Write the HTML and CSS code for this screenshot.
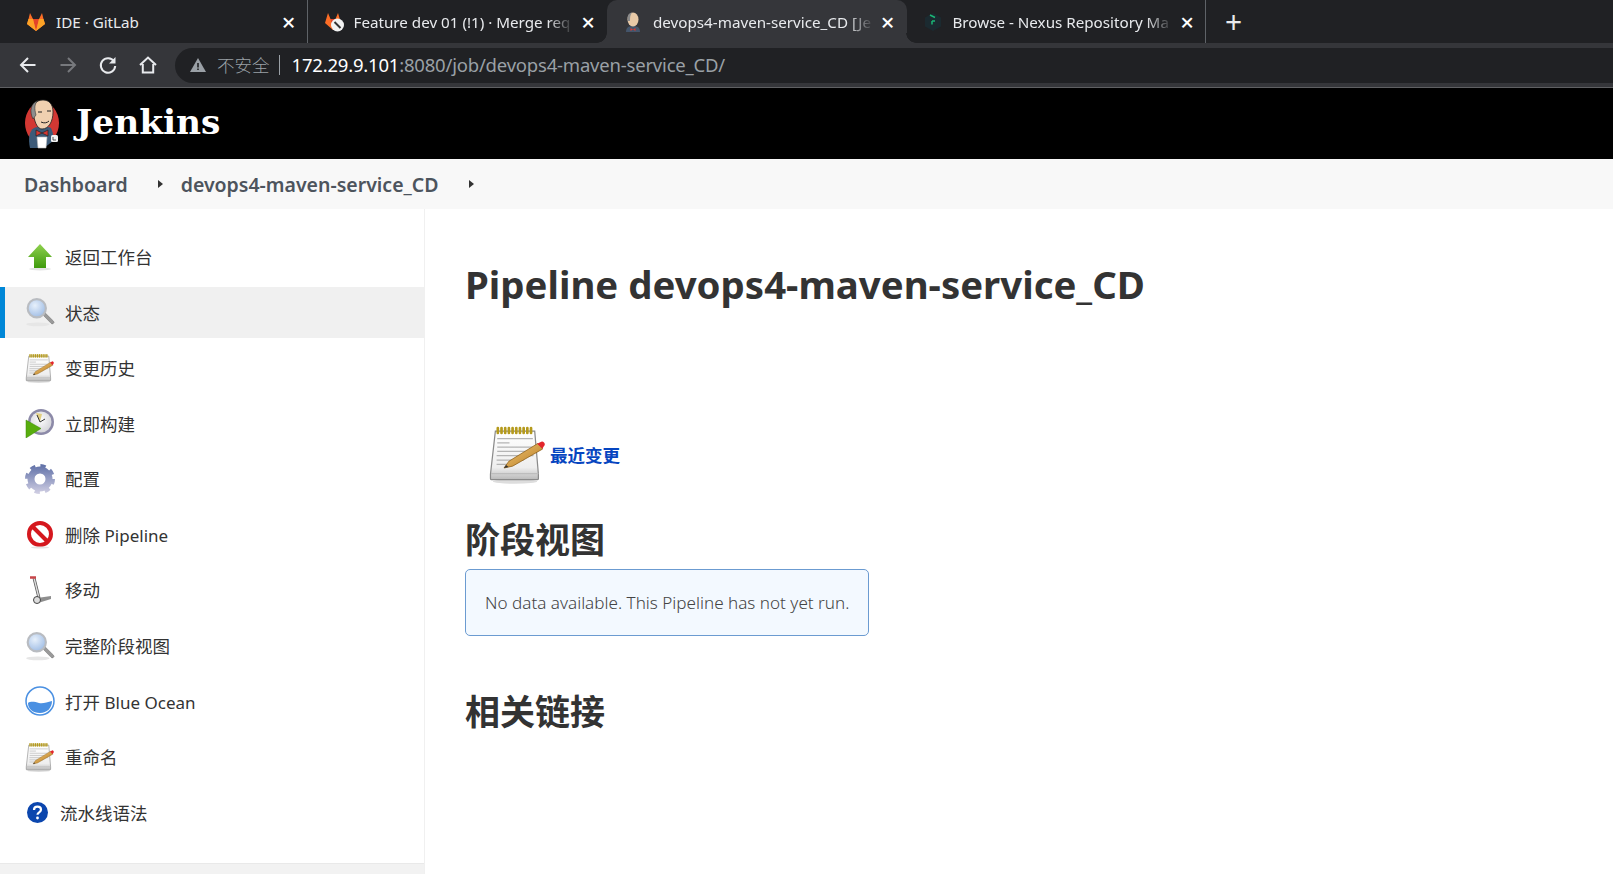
FILE: index.html
```html
<!DOCTYPE html>
<html lang="zh-CN">
<head>
<meta charset="utf-8">
<title>devops4-maven-service_CD [Jenkins]</title>
<link rel="stylesheet" href="styles.css">
</head>
<body>
<svg class="defs" width="0" height="0" aria-hidden="true">
  <defs>
    <linearGradient id="g-paper" x1="0" y1="0" x2="0" y2="1"><stop offset="0" stop-color="#fff"/><stop offset="0.75" stop-color="#eeeeee"/><stop offset="1" stop-color="#b9b9b9"/></linearGradient>
    <linearGradient id="g-pencil" x1="0" y1="0" x2="1" y2="1"><stop offset="0" stop-color="#f4c776"/><stop offset="1" stop-color="#b57b22"/></linearGradient>
    <linearGradient id="g-up" x1="0" y1="0" x2="0" y2="1"><stop offset="0" stop-color="#8fd14f"/><stop offset="1" stop-color="#3f9a0c"/></linearGradient>
    <radialGradient id="g-lens" cx="0.4" cy="0.35" r="0.7"><stop offset="0" stop-color="#e7f0fb"/><stop offset="1" stop-color="#9dbbe4"/></radialGradient>
    <linearGradient id="g-gear" gradientUnits="userSpaceOnUse" x1="0" y1="0" x2="0" y2="30"><stop offset="0" stop-color="#5d6ea6"/><stop offset="1" stop-color="#d2d0e4"/></linearGradient>
    <radialGradient id="g-clock" cx="0.45" cy="0.4" r="0.6"><stop offset="0" stop-color="#fff"/><stop offset="1" stop-color="#d5d5da"/></radialGradient>
    <symbol id="i-note" viewBox="0 0 48 48">
      <ellipse cx="22" cy="46" rx="18" ry="1.800" fill="#ddd"/>
      <path d="M6 5h32l3 35v3.500a1 1 0 0 1-1 1H3a1 1 0 0 1-1-1V40z" fill="url(#g-paper)" stroke="#8a8a8a"/>
      <path d="M2.500 39.500h38.500" stroke="#bdbdbd" stroke-width="1"/>
      <path d="M8 2.500v4M11 2.500v4M14 2.500v4M17 2.500v4M20 2.500v4M23 2.500v4M26 2.500v4M29 2.500v4M32 2.500v4M35 2.500v4" stroke="#b59a1c" stroke-width="2.200" stroke-linecap="round"/>
      <path d="M7.500 11h29M7.500 14.500h10M7.500 18h29M7.500 21.500h29M7 25h30M7 28.500h22M7 32h12" stroke="#b4b4b4" stroke-width="1"/>
      <path d="M13 35l4-5.500L40.500 15l4 4.500L20 33.500z" fill="url(#g-pencil)" stroke="#8a5a12" stroke-width=".6"/>
      <path d="M13 35l1.700-2.400 2 1.600z" fill="#333"/>
      <path d="M40 15.300l2.500-1.300a2.200 2.200 0 0 1 2.800 3.400l-1 2z" fill="#e3252b"/>
    </symbol>
    <symbol id="i-search" viewBox="0 0 28 28">
      <ellipse cx="12" cy="25.500" rx="11" ry="1.800" fill="#e6e6e6"/>
      <path d="M16.500 16.500l2-2 8 8a1.500 1.500 0 0 1-.3 2.400 1.500 1.500 0 0 1-1.900-.4z" fill="#9a9a9a" stroke="#777" stroke-width=".5"/>
      <circle cx="11" cy="10.500" r="8.500" fill="url(#g-lens)" stroke="#b9bcc1" stroke-width="2"/>
    </symbol>
  </defs>
</svg>

<header class="tabstrip">
  <div class="tab tab-first">
    <svg class="fav" viewBox="0 0 20 20"><path d="M10 19L1 12l1.500-5L4 1l3 6h6l3-6 1.500 6L19 12z" fill="#fc6d26"/><path d="M10 19L7 7h6z" fill="#e24329"/><path d="M10 19L1 12l1.500-5H7zM10 19l9-7-1.500-5H13z" fill="#fca326"/></svg>
    <span class="tab-title tab-title-plain">IDE · GitLab</span><span class="tab-x">×</span>
  </div>
  <div class="tab">
    <svg class="fav" viewBox="0 0 20 20"><path d="M9 18L1 11l1.500-5L4 1l2.500 6h5L14 1l1.500 5 1.500 5z" fill="#fc6d26"/><path d="M9 18L6.500 7h5z" fill="#e24329"/><circle cx="13.500" cy="13" r="6.500" fill="#f2f2f2"/><path d="M10.500 10l6 6" stroke="#333" stroke-width="2"/></svg>
    <span class="tab-title">Feature dev 01 (!1) · Merge req</span><span class="tab-x">×</span>
  </div>
  <div class="tab tab-active">
    <svg class="fav" viewBox="0 0 20 20"><path d="M3 20c0-4 2-6 7-6s7 2 7 6z" fill="#44556b"/><ellipse cx="10" cy="7.500" rx="5.500" ry="7" fill="#e8c9a7"/><path d="M5 9C3.500 4 6 .800 9 .500 7 3 7 6 7 9z" fill="#8b8b8b"/><path d="M7.500 16l2.500 1.500 2.500-1.500v3l-2.500-1.500L7.500 19z" fill="#d33833"/></svg>
    <span class="tab-title">devops4-maven-service_CD [Je</span><span class="tab-x">×</span>
  </div>
  <div class="tab tab-last">
    <svg class="fav" viewBox="0 0 20 20"><path d="M10 1l8 4.500v9L10 19l-8-4.500v-9z" fill="#1b2a30"/><path d="M7 3l5 2.500M9 9v3.500M9 9h3" stroke="#1bb675" stroke-width="1.500" fill="none"/></svg>
    <span class="tab-title">Browse - Nexus Repository Ma</span><span class="tab-x">×</span>
  </div>
  <span class="tab-plus">+</span>
</header>

<nav class="toolbar">
  <svg class="tool" viewBox="0 0 20 20"><path d="M17.500 10H3.500M10 3l-7 7 7 7" fill="none" stroke="#e8eaed" stroke-width="2"/></svg>
  <svg class="tool" viewBox="0 0 20 20"><path d="M2.500 10h14M10 3l7 7-7 7" fill="none" stroke="#77797d" stroke-width="2"/></svg>
  <svg class="tool" viewBox="0 0 20 20"><path d="M16 6.500A7.200 7.200 0 1 0 17.200 11" fill="none" stroke="#e8eaed" stroke-width="2"/><path d="M17.500 2v6.500H11z" fill="#e8eaed"/></svg>
  <svg class="tool" viewBox="0 0 20 20"><path d="M2 10l8-7.500 8 7.500M4.800 9v8.500h10.400V9" fill="none" stroke="#e8eaed" stroke-width="2"/></svg>
  <div class="omnibox">
    <svg class="warn" viewBox="0 0 16 16"><path d="M8 1l8 14H0z" fill="#9aa0a6"/><path d="M7.200 6h1.600v4.500H7.200zM7.200 11.500h1.600V13H7.200z" fill="#202124"/></svg>
    <span class="insecure">不安全</span><span class="omni-sep"></span>
    <span class="url"><span class="host">172.29.9.101</span>:8080/job/devops4-maven-service_CD/</span>
  </div>
</nav>

<div class="jenkins-head">
  <svg class="logo" viewBox="0 0 36 50">
    <ellipse cx="18" cy="24" rx="17" ry="21" fill="#d33833"/>
    <path d="M6 49c-2-9-1-17 4-20 5-2 13-2 17 0 2 4 3 9 2 13l-9 7z" fill="#3c5a78"/>
    <path d="M9 12C8 5 13 1 19 1s10 4 10 12c0 9-4 17-11 17-5 0-8-8-9-18z" fill="#f0d0b0" stroke="#222" stroke-width=".8"/>
    <path d="M9 20C5 12 7 4 14 1.500 10 5 10.500 10 12 16z" fill="#8d8d8d" stroke="#222" stroke-width=".5"/>
    <path d="M14 13h4M23 12h4M17 23c3 1.500 6 1 8-1" stroke="#222" stroke-width="1" fill="none"/>
    <path d="M12 31l6 3 6-3v6l-6-3-6 3z" fill="#d33833" stroke="#1a1a1a" stroke-width=".6"/>
    <path d="M13 38h10l-1 11h-8z" fill="#fff" stroke="#bbb" stroke-width=".6"/>
    <rect x="27" y="36" width="7" height="7" rx="1.500" fill="#f2f2f2"/>
    <path d="M29 38v3h3" stroke="#333" fill="none" stroke-width=".8"/>
  </svg>
  <span class="brand">Jenkins</span>
</div>

<div class="crumbs">
  <a class="crumb">Dashboard</a><i class="crumb-arrow"></i>
  <a class="crumb">devops4-maven-service_CD</a><i class="crumb-arrow"></i>
</div>

<main class="page">
  <aside class="side">
    <ul class="menu">
      <li class="item"><svg class="ico" viewBox="0 0 30 30"><ellipse cx="15" cy="27" rx="11" ry="1.500" fill="#e4e4e4"/><path d="M15 2l12 13h-6v11H9V15H3z" fill="url(#g-up)"/></svg><span>返回工作台</span></li>
      <li class="item item-on"><svg class="ico"><use href="#i-search"/></svg><span>状态</span></li>
      <li class="item"><svg class="ico"><use href="#i-note"/></svg><span>变更历史</span></li>
      <li class="item"><svg class="ico" viewBox="0 0 30 30"><circle cx="16" cy="14" r="13" fill="#8c8aa8"/><circle cx="16" cy="14" r="10.500" fill="url(#g-clock)"/><path d="M11 5l6 1-2 8z" fill="#e2cf80"/><path d="M15 14l5-3M15 14l-3-7" stroke="#333" stroke-width="1"/><path d="M1 12l15 8.500L1 30z" fill="#58ad0e" stroke="#3f8a08" stroke-width=".5"/></svg><span>立即构建</span></li>
      <li class="item"><svg class="ico" viewBox="0 0 30 30"><circle cx="15" cy="15" r="12.500" fill="none" stroke="url(#g-gear)" stroke-width="5" stroke-dasharray="5 4.820"/><circle cx="15" cy="15" r="9" fill="none" stroke="url(#g-gear)" stroke-width="7"/><circle cx="15" cy="15" r="5" fill="#fff"/></svg><span>配置</span></li>
      <li class="item"><svg class="ico" viewBox="0 0 30 30"><circle cx="15" cy="15" r="11" fill="#fff" stroke="#d5181e" stroke-width="4"/><path d="M7.500 7.500l15 15" stroke="#d5181e" stroke-width="4"/><ellipse cx="15" cy="28.500" rx="9" ry="1" fill="#e4e4e4"/></svg><span>删除 <span class="lat">Pipeline</span></span></li>
      <li class="item"><svg class="ico" viewBox="0 0 30 30"><path d="M9 3l5 20" stroke="#555" stroke-width="3" fill="none"/><path d="M9 3l5 20" stroke="#ddd" stroke-width="1.400" fill="none"/><path d="M5 2.500h6" stroke="#c8464a" stroke-width="2.500"/><path d="M12 23l14-2v3l-13 4z" fill="#8e8e8e"/><circle cx="12" cy="25" r="3.500" fill="#ddd" stroke="#444"/></svg><span>移动</span></li>
      <li class="item"><svg class="ico"><use href="#i-search"/></svg><span>完整阶段视图</span></li>
      <li class="item"><svg class="ico" viewBox="0 0 30 30"><circle cx="15" cy="15" r="14" fill="#fff" stroke="#4a90e2" stroke-width="1.500"/><path d="M3 17c3-2 7-1 11 0s8-1 13-2c0 7-5 12-12 12S3 23 3 17z" fill="#4a90e2"/></svg><span>打开 <span class="lat">Blue Ocean</span></span></li>
      <li class="item"><svg class="ico"><use href="#i-note"/></svg><span>重命名</span></li>
      <li class="item item-help"><svg class="ico-help" viewBox="0 0 21 21"><circle cx="10.500" cy="10.500" r="10.500" fill="#0b46ae"/><path d="M7 8c0-2 1.500-3.300 3.500-3.300S14 6 14 7.800c0 2.700-3.500 2.500-3.500 5" fill="none" stroke="#fff" stroke-width="2.200"/><circle cx="10.500" cy="16" r="1.400" fill="#fff"/></svg><span>流水线语法</span></li>
    </ul>
    <div class="side-foot"></div>
  </aside>
  <section class="content">
    <h1 class="title">Pipeline devops4-maven-service_CD</h1>
    <div class="recent">
      <svg class="recent-ico"><use href="#i-note"/></svg>
      <a class="recent-link">最近变更</a>
    </div>
    <h2 class="sub sub-stage">阶段视图</h2>
    <div class="notice">No data available. This Pipeline has not yet run.</div>
    <h2 class="sub sub-links">相关链接</h2>
  </section>
</main>
</body>
</html>
```
FILE: styles.css
```css
* { box-sizing: border-box; }
html, body { margin: 0; height: 874px; overflow: hidden; }
body {
  display: flex;
  flex-direction: column;
  background: #fff;
  color: #333;
  font-family: "Noto Sans", "Noto Sans CJK SC", sans-serif;
}
.defs { position: absolute; }

.tabstrip {
  flex: none;
  height: 43px;
  display: flex;
  padding-left: 8px;
  background: #202124;
  color: #e8eaed;
  font-size: 15.200px;
}
.tab {
  position: relative;
  width: 299.500px;
  display: flex;
  align-items: center;
  padding: 0 10px 0 16px;
  border-right: 1px solid transparent;
}
.tab-first { padding-left: 18px; border-right-color: #5f6368; }
.tab-last { border-right-color: #5f6368; }
.tab-active {
  background: #35363a;
  border-radius: 10px 10px 0 0;
}
.tab-active::before, .tab-active::after {
  content: "";
  position: absolute;
  bottom: 0;
  width: 10px;
  height: 10px;
}
.tab-active::before {
  left: -10px;
  background: radial-gradient(circle at 0 0, #202124 9.500px, #35363a 10px);
}
.tab-active::after {
  right: -10px;
  background: radial-gradient(circle at 100% 0, #202124 9.500px, #35363a 10px);
}
.fav { flex: none; width: 20px; height: 20px; margin-right: 10px; }
.tab-title {
  flex: 1;
  min-width: 0;
  white-space: nowrap;
  -webkit-mask-image: linear-gradient(to right, #000 88%, transparent 100%);
  mask-image: linear-gradient(to right, #000 88%, transparent 100%);
}
.tab-title-plain {
  -webkit-mask-image: none;
  mask-image: none;
}
.tab-x {
  flex: none;
  width: 16px;
  margin-left: 6px;
  text-align: center;
  font-size: 24px;
  font-weight: 500;
  line-height: 20px;
  color: #fff;
}
.tab-plus {
  align-self: center;
  margin-left: 19px;
  font-size: 30px;
  line-height: 30px;
  color: #e8eaed;
}

.toolbar {
  flex: none;
  height: 45px;
  display: flex;
  align-items: center;
  padding: 0 0 0 18px;
  background: #35363a;
  border-bottom: 1px solid #5f6063;
}
.tool { flex: none; width: 20px; height: 20px; margin-right: 20px; }
.omnibox {
  flex: 1;
  height: 35px;
  margin-left: -3px;
  display: flex;
  align-items: center;
  padding-left: 15px;
  background: #202124;
  border-radius: 18px 0 0 18px;
  font-size: 18px;
  color: #9aa0a6;
}
.warn { flex: none; width: 16px; height: 16px; margin-right: 11px; }
.insecure { font-size: 17.500px; font-weight: 300; margin-top: -2px; }
.omni-sep { width: 1px; height: 20px; margin: 0 12px 0 9px; background: #9aa0a6; }
.url { font-size: 18.500px; letter-spacing: -.2px; margin-top: -2px; }
.host { color: #fff; }

.jenkins-head {
  flex: none;
  height: 71px;
  display: flex;
  align-items: center;
  padding-left: 24px;
  background: #000;
}
.logo { width: 36px; height: 50px; margin-right: 15px; }
.brand {
  font-family: "DejaVu Serif", serif;
  font-weight: 700;
  font-size: 34.400px;
  line-height: 1;
  color: #fff;
  margin: -2px 0 0 1px;
}

.crumbs {
  flex: none;
  height: 50px;
  display: flex;
  align-items: center;
  padding-left: 24px;
  background: #f8f8f8;
}
.crumb {
  font-size: 19.500px;
  font-weight: 600;
  color: #4d545d;
}
.crumb-arrow {
  width: 0;
  height: 0;
  margin: 0 18px 0 30px;
  border-left: 5px solid #333;
  border-top: 4.500px solid transparent;
  border-bottom: 4.500px solid transparent;
}

.page {
  flex: 1;
  min-height: 0;
  display: flex;
}
.side {
  flex: none;
  width: 425px;
  display: flex;
  flex-direction: column;
  padding-top: 22px;
  border-right: 1px solid #f0f0f0;
}
.menu {
  flex: 1;
  margin: 0;
  padding: 0;
  list-style: none;
}
.item {
  height: 51px;
  margin-bottom: 4.580px;
  display: flex;
  align-items: center;
  padding-left: 20px;
  border-left: 5px solid transparent;
  font-size: 17.500px;
  color: #333;
}
.item-on {
  background: #f0f0f0;
  border-left-color: #0087d7;
}
.lat { font-size: 17px; }
.ico { flex: none; width: 30px; height: 30px; margin-right: 10px; }
.ico-help { flex: none; width: 21px; height: 21px; margin: 0 12px 0 2px; }
.side-foot {
  flex: none;
  height: 11px;
  background: #f2f2f2;
  border-top: 1px solid #e9e9e9;
}

.content {
  flex: 1;
  padding: 51px 0 0 40px;
}
.title {
  margin: 0;
  font-size: 38.400px;
  line-height: 48px;
  font-weight: 700;
  color: #333;
}
.recent {
  display: flex;
  align-items: center;
  height: 56px;
  margin: 118px 0 0 22.500px;
}
.recent-ico { flex: none; width: 59px; height: 59px; margin-right: 3.500px; }
.recent-link {
  font-size: 17.500px;
  font-weight: 700;
  color: #0645c0;
}
.sub {
  margin: 0;
  font-size: 35px;
  line-height: 42px;
  font-weight: 700;
  color: #333;
}
.sub-stage { margin-top: 37px; }
.sub-links { margin-top: 55px; }
.notice {
  width: 404px;
  height: 67px;
  margin-top: 8px;
  display: flex;
  align-items: center;
  padding-left: 19px;
  background: #f3f9ff;
  border: 1px solid #6b9bd1;
  border-radius: 5px;
  font-size: 17.100px;
  font-weight: 300;
  white-space: nowrap;
  color: #444;
}
```
